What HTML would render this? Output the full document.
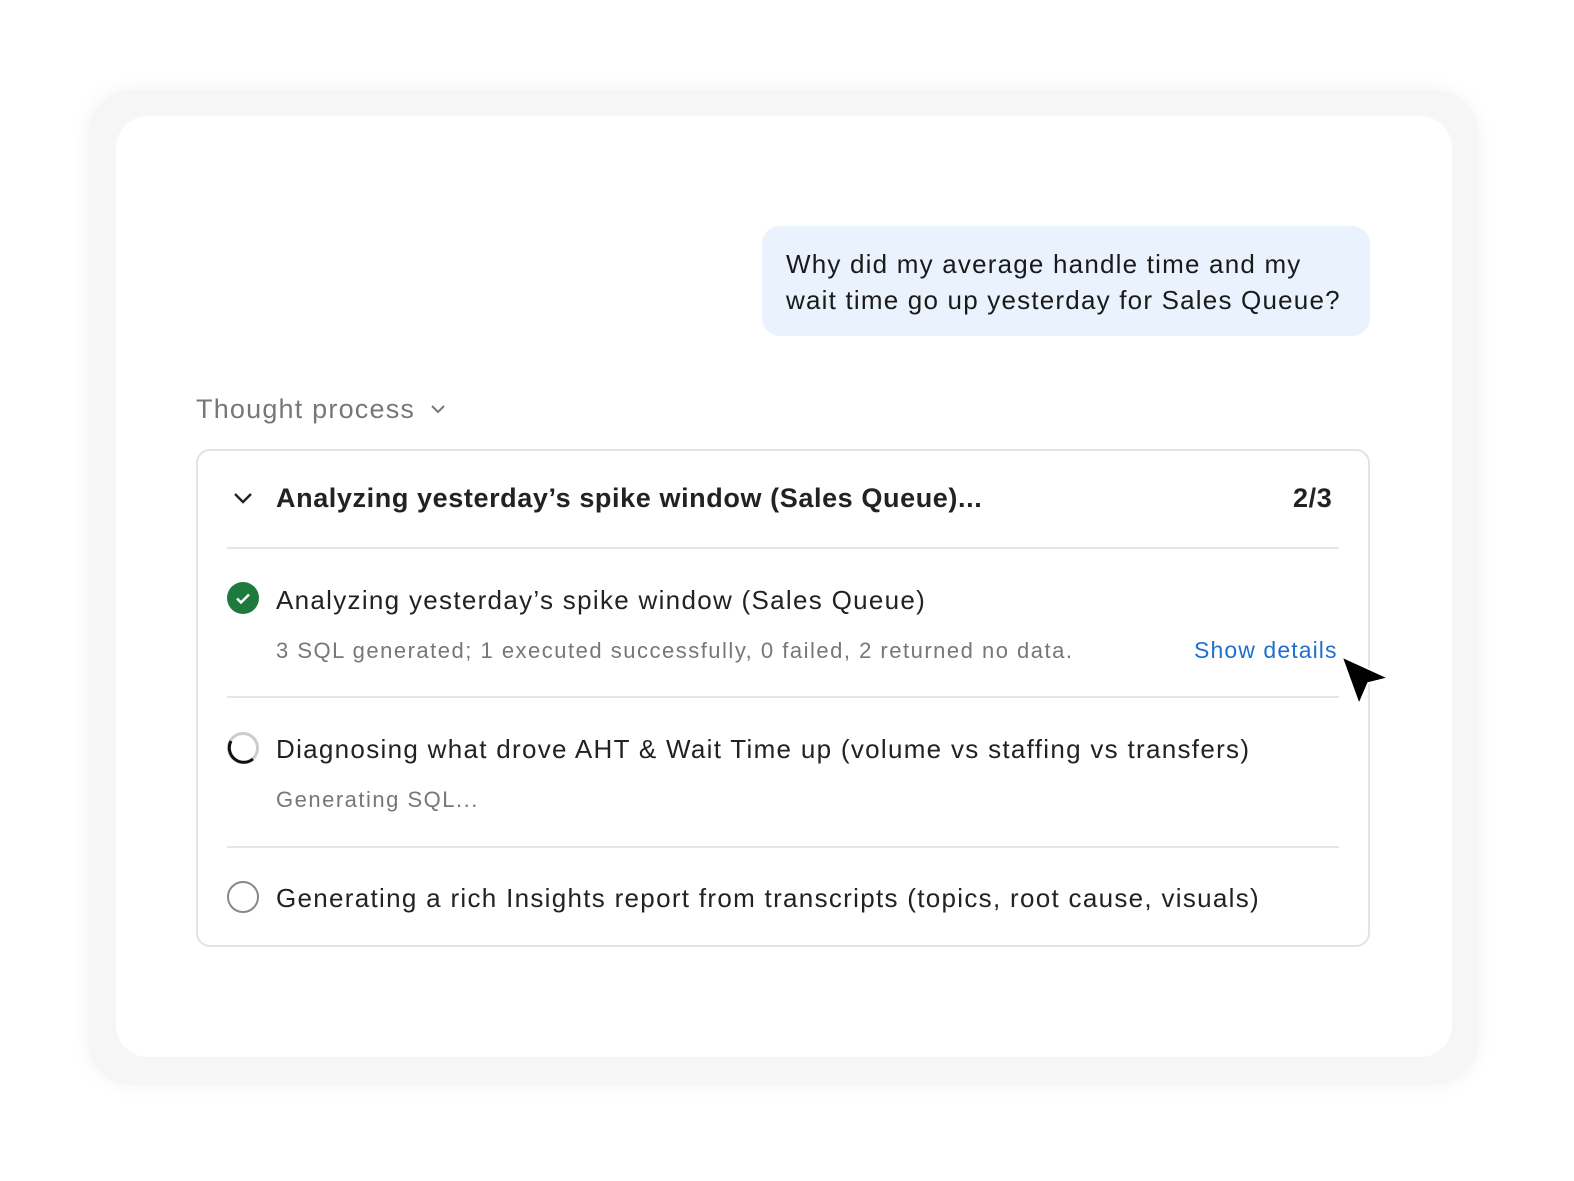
<!DOCTYPE html>
<html><head><meta charset="utf-8"><style>
body{margin:0;width:1574px;height:1181px;background:#fff;position:relative;font-family:"Liberation Sans",sans-serif;overflow:hidden}
.outer{position:absolute;left:88px;top:90px;width:1390px;height:995px;background:#f6f6f6;border-radius:44px;box-shadow:0 0 20px rgba(0,0,0,0.05)}
.inner{position:absolute;left:116px;top:116px;width:1336px;height:941px;background:#fff;border-radius:32px}
.abs{position:absolute;white-space:nowrap}
.bubble{position:absolute;left:762px;top:226px;width:608px;height:110px;background:#eaf3fd;border-radius:18px;box-sizing:border-box;padding:20px 24px;font-size:26px;line-height:36px;color:#1a1a1a;letter-spacing:1.2px;white-space:nowrap}
.card{position:absolute;left:196px;top:449px;width:1174px;height:498px;border:2px solid #e3e3e3;border-radius:14px;box-sizing:border-box}
.hr{position:absolute;left:227px;width:1112px;height:2px;background:#e6e6e6}
.t{font-size:26px;color:#222;letter-spacing:1.3px}
.s{font-size:22px;color:#777;letter-spacing:1.5px}
</style></head><body>
<div class="outer"></div><div class="inner"></div>
<div class="bubble">Why did my average handle time and my<br>wait time go up yesterday for Sales Queue?</div>
<div class="abs" style="left:196px;top:394px;font-size:27px;color:#777;letter-spacing:1.2px">Thought process</div>
<svg class="abs" style="left:430px;top:403px" width="16" height="12" viewBox="0 0 16 12"><path d="M2 3l6 6 6-6" fill="none" stroke="#777" stroke-width="2"/></svg>
<div class="card"></div>
<svg class="abs" style="left:233px;top:491px" width="20" height="14" viewBox="0 0 20 14"><path d="M2 3l8 8 8-8" fill="none" stroke="#222" stroke-width="2.4"/></svg>
<div class="abs" style="left:276px;top:483px;font-size:27px;font-weight:bold;color:#222;letter-spacing:0.6px">Analyzing yesterday’s spike window (Sales Queue)...</div>
<div class="abs" style="left:1293px;top:483px;font-size:27px;font-weight:bold;color:#222;letter-spacing:0.6px">2/3</div>
<div class="hr" style="top:547px"></div>
<svg class="abs" style="left:226px;top:581px" width="34" height="34" viewBox="0 0 34 34"><circle cx="17" cy="17" r="16" fill="#1e7a3c"/><path d="M11 17.5l4 4 8-8" fill="none" stroke="#fff" stroke-width="2.4"/></svg>
<div class="abs t" style="left:276px;top:585px">Analyzing yesterday’s spike window (Sales Queue)</div>
<div class="abs s" style="left:276px;top:638px">3 SQL generated; 1 executed successfully, 0 failed, 2 returned no data.</div>
<div class="abs" style="left:1194px;top:637px;font-size:23px;color:#1f6fd0;letter-spacing:1.1px">Show details</div>
<svg class="abs" style="left:1338px;top:654px" width="54" height="54" viewBox="0 0 54 54"><path d="M4 3L50 24 30 29 21 50Z" fill="#000" stroke="#fff" stroke-width="1.5" stroke-linejoin="round"/></svg>
<div class="hr" style="top:696px"></div>
<svg class="abs" style="left:226px;top:731px" width="34" height="34" viewBox="0 0 34 34"><circle cx="17" cy="17" r="14.5" fill="none" stroke="#ccc" stroke-width="3"/><path d="M5 10A14.5 14.5 0 0 0 27 28" fill="none" stroke="#111" stroke-width="3"/></svg>
<div class="abs t" style="left:276px;top:734px">Diagnosing what drove AHT &amp; Wait Time up (volume vs staffing vs transfers)</div>
<div class="abs s" style="left:276px;top:787px">Generating SQL...</div>
<div class="hr" style="top:846px"></div>
<svg class="abs" style="left:226px;top:880px" width="34" height="34" viewBox="0 0 34 34"><circle cx="17" cy="17" r="15" fill="none" stroke="#888" stroke-width="2"/></svg>
<div class="abs t" style="left:276px;top:883px">Generating a rich Insights report from transcripts (topics, root cause, visuals)</div>
</body></html>
